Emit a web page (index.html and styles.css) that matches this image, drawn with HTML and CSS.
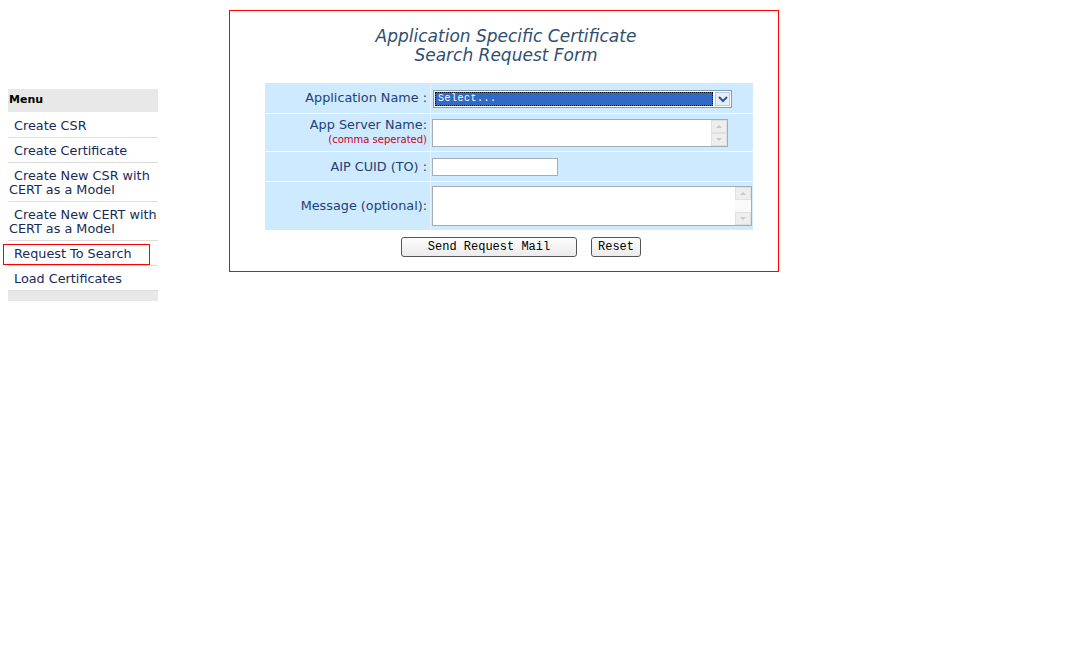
FILE: index.html
```html
<!DOCTYPE html>
<html>
<head>
<meta charset="utf-8">
<title>Application Specific Certificate Search Request Form</title>
<link rel="stylesheet" href="styles.css">
</head>
<body>
<div class="page">
  <div class="sidebar">
    <div class="menu-head">Menu</div>
    <div class="menu-item">Create CSR</div>
    <div class="menu-item">Create Certificate</div>
    <div class="menu-item">Create New CSR with CERT as a Model</div>
    <div class="menu-item">Create New CERT with CERT as a Model</div>
    <div class="menu-item active">Request To Search</div>
    <div class="menu-item">Load Certificates</div>
    <div class="menu-foot"></div>
  </div>
  <div class="main">
    <div class="formbox">
      <h1 class="title">Application Specific Certificate<br>Search Request Form</h1>
      <table class="form">
        <tr class="r1">
          <td class="lbl">Application Name :</td>
          <td class="fld">
            <div class="select">
              <div class="sel-val"><span>Select...</span></div>
              <div class="sel-btn"><svg width="12" height="8" viewBox="0 0 12 8"><path d="M2 2 L6 6 L10 2" fill="none" stroke="#2c5a88" stroke-width="2"/></svg></div>
            </div>
          </td>
        </tr>
        <tr class="r2">
          <td class="lbl">App Server Name:<br><span class="note">(comma seperated)</span></td>
          <td class="fld">
            <div class="ta ta1">
              <div class="sb"><div class="arr up"></div><div class="arr dn"></div></div>
            </div>
          </td>
        </tr>
        <tr class="r3">
          <td class="lbl">AIP CUID (TO) :</td>
          <td class="fld"><div class="inp"></div></td>
        </tr>
        <tr class="r4">
          <td class="lbl">Message (optional):</td>
          <td class="fld">
            <div class="ta ta2">
              <div class="sb"><div class="arr up"></div><div class="arr dn"></div></div>
            </div>
          </td>
        </tr>
      </table>
      <div class="buttons">
        <button class="btn send">Send Request Mail</button>
        <button class="btn reset">Reset</button>
      </div>
    </div>
  </div>
</div>
</body>
</html>
```
FILE: styles.css
```css
html, body { margin: 0; padding: 0; background: #fff; }
body { padding: 8px; font-family: "DejaVu Sans", Verdana, sans-serif; }
.page { display: flex; align-items: flex-start; }
.sidebar { width: 150px; margin-top: 81px; font-size: 12.8px; color: #1a2a55; }
.menu-head {
  height: 23px; line-height: 22px; background: #e8e8e8;
  font-weight: bold; font-size: 11px; color: #000; padding-left: 1px;
  border-bottom: 1px solid #fff;
}
.menu-item {
  position: relative;
  padding: 6px 0 4px 1px; text-indent: 5px; line-height: 14px;
  border-bottom: 1px solid #dcdcdc;
  color: #1a2a55;
}
.menu-item.active::after {
  content: ""; position: absolute; left: -5px; top: 3px; width: 145px; height: 19px;
  border: 1px solid #ff0000;
}
.menu-foot { height: 10px; background: #e8e8e8; }
.main { margin-left: 71px; margin-top: 2px; }
.formbox { width: 548px; height: 260px; border: 1px solid #ff0000; }
.title {
  margin: 16px 0 0 0; text-align: center; font-weight: normal; font-style: italic;
  font-family: "DejaVu Sans", sans-serif; font-size: 17px; line-height: 19px; color: #2f4e70;
  padding-left: 4px;
}
.form {
  margin: 18px 0 0 35px; border-collapse: collapse; width: 488px;
  background: #cdeaff; font-size: 12.8px; color: #1f3f76;
}
.form td { padding: 0; border-bottom: 1px solid #f2f9ff; }
.form .lbl { width: 162px; text-align: right; padding-right: 3px; border-right: 1px solid #e4f2ff; line-height: 14px; }
.r1 td { height: 30px; }
.r2 td { height: 37px; }
.r3 td { height: 29px; }
.r4 td { height: 48px; border-bottom: none; }
.note { color: #cc0022; font-size: 10px; }
.fld { padding-left: 1px !important; }
.select { width: 297px; height: 16px; border: 1px solid #7f9db9; display: flex; background: #fff; margin-top: 1px; margin-left: 1px; }
.sel-val { flex: 1; padding: 1px; }
.sel-val span { display: block; height: 12px; background: #316ac5; border: 1px dotted #000; color: #fff; font-family: "Liberation Mono", monospace; font-size: 10px; line-height: 12px; padding-left: 2px; letter-spacing: 0.5px; }
.sel-btn { width: 15px; height: 14px; margin: 1px; background: #e6eefc; border: 1px solid #b8c8e8; box-sizing: border-box; display: flex; align-items: center; justify-content: center; }
.ta { background: #fff; border: 1px solid #a5acb5; display: flex; justify-content: flex-end; }
.ta1 { width: 294px; height: 26px; }
.ta2 { width: 318px; height: 38px; }
.sb { width: 16px; display: flex; flex-direction: column; justify-content: space-between; background: #fafafa; }
.arr { height: 13px; background: #eeeeee; border: 1px solid #e0e0e0; box-sizing: border-box; position: relative; }
.arr.up::after, .arr.dn::after { content: ""; position: absolute; left: 4px; border-left: 3px solid transparent; border-right: 3px solid transparent; }
.arr.up::after { top: 4px; border-bottom: 3px solid #c8c8c8; }
.arr.dn::after { top: 4px; border-top: 3px solid #c8c8c8; }
.inp { width: 124px; height: 16px; background: #fff; border: 1px solid #a5acb5; }
.buttons { display: flex; gap: 14px; margin: 7px 0 0 171px; }
.btn {
  height: 20px; padding: 0; font-family: "Liberation Mono", monospace; font-size: 12px; color: #000;
  background: linear-gradient(#fdfdfd, #ebebeb); border: 1px solid #555; border-radius: 3px;
}
.btn.send { width: 176px; }
.btn.reset { width: 50px; }
```
